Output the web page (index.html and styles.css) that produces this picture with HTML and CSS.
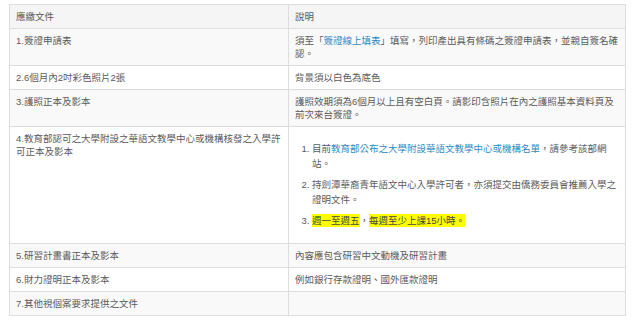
FILE: index.html
```html
<!DOCTYPE html>
<html lang="zh-Hant">
<head>
<meta charset="utf-8">
<title>應繳文件</title>
<link rel="stylesheet" href="styles.css">
</head>
<body>
<div class="page">
  <table class="docs">
    <colgroup>
      <col class="col-doc">
      <col class="col-desc">
    </colgroup>
    <thead>
      <tr>
        <th>應繳文件</th>
        <th>說明</th>
      </tr>
    </thead>
    <tbody>
      <tr>
        <td>1.簽證申請表</td>
        <td>須至「<a href="#" class="link">簽證線上填表</a>」填寫，列印產出具有條碼之簽證申請表，並親自簽名確認。</td>
      </tr>
      <tr>
        <td>2.6個月內2吋彩色照片2張</td>
        <td>背景須以白色為底色</td>
      </tr>
      <tr>
        <td>3.護照正本及影本</td>
        <td>護照效期須為6個月以上且有空白頁。請影印含照片在內之護照基本資料頁及前次來台簽證。</td>
      </tr>
      <tr>
        <td>4.教育部認可之大學附設之華語文教學中心或機構核發之入學許可正本及影本</td>
        <td>
          <ol class="notes">
            <li>目前<a href="#" class="link">教育部公布之大學附設華語文教學中心或機構名單</a>，請參考該部網站。</li>
            <li>持劍潭華裔青年語文中心入學許可者，亦須提交由僑務委員會推薦入學之證明文件。</li>
            <li><span class="hl">週一至週五</span>，<span class="hl">每週至少上課15小時。</span></li>
          </ol>
        </td>
      </tr>
      <tr>
        <td>5.研習計畫書正本及影本</td>
        <td>內容應包含研習中文動機及研習計畫</td>
      </tr>
      <tr>
        <td>6.財力證明正本及影本</td>
        <td>例如銀行存款證明、國外匯款證明</td>
      </tr>
      <tr>
        <td>7.其他視個案要求提供之文件</td>
        <td></td>
      </tr>
    </tbody>
  </table>
</div>
</body>
</html>
```

FILE: styles.css
```css
html, body {
  margin: 0;
  padding: 0;
  background: #ffffff;
}

body {
  font-family: "Liberation Sans", "Noto Sans CJK TC", sans-serif;
  font-size: 9.5px;
  color: #5a5a5a;
}

.page {
  padding: 4px 0 0 9px;
}

.docs {
  width: 617px;
  border-collapse: collapse;
  border: 1px solid #dddddd;
  table-layout: fixed;
}

.col-doc {
  width: 279px;
}

.docs th,
.docs td {
  border: 1px solid #dddddd;
  padding: 5px 6px;
  line-height: 13px;
  text-align: left;
  vertical-align: top;
  font-weight: normal;
}

.docs thead th {
  background: #f5f5f5;
}

.docs tbody tr:nth-child(odd) td {
  background: #f9f9f9;
}

.docs tbody tr:nth-child(even) td {
  background: #ffffff;
}

.link {
  color: #2f8ac4;
  text-decoration: none;
}

.notes {
  margin: 9px 0 10px 0;
  padding-left: 17px;
}

.notes li {
  line-height: 15px;
}

.notes li + li {
  margin-top: 6px;
}

.hl {
  background: #ffff00;
  color: #444444;
  padding: 1px 0;
}
```
